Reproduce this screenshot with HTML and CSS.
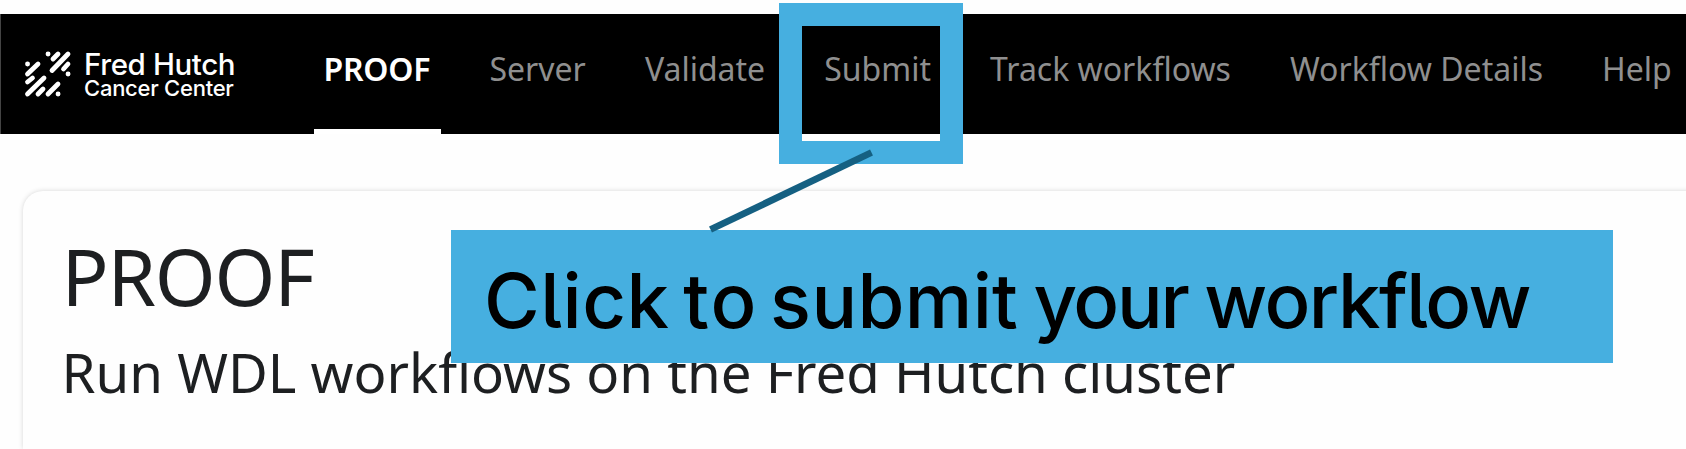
FILE: index.html
```html
<!DOCTYPE html>
<html lang="en">
<head>
<meta charset="utf-8">
<title>PROOF</title>
<link rel="stylesheet" href="styles.css">
</head>
<body>
<header class="navbar">
  <a class="brand">
    <svg class="brand-mark" viewBox="0 0 56 56" width="56" height="56">
      <g stroke="#fff" stroke-width="4.8" stroke-linecap="round" fill="none">
        <path d="M28 8h.1M7.5 18h.1M48 28h.1M38 48h.1M33 13l5-5M32 24.5L48 8M43.500 23l4.500-5M7.500 28L18 18M7.500 36l5-4M7.500 48L24 32M18 48l5-5M28 48l10-10"/>
      </g>
    </svg>
    <span class="brand-text"><span class="brand-name">Fred Hutch</span><span class="brand-sub">Cancer Center</span></span>
  </a>
  <nav class="menu">
    <a class="item active">PROOF</a>
    <a class="item">Server</a>
    <a class="item">Validate</a>
    <a class="item">Submit</a>
    <a class="item">Track workflows</a>
    <a class="item">Workflow Details</a>
    <a class="item">Help</a>
  </nav>
</header>
<main class="card">
  <h1 class="title">PROOF</h1>
  <p class="subtitle">Run WDL workflows on the Fred Hutch cluster</p>
</main>
<div class="highlight"></div>
<div class="callout"><span class="w-click">Click</span> <span class="w-to">to</span> <span class="w-submit">submit</span> <span class="w-your">your</span> <span class="w-workflow">workflow</span></div>
<svg class="pointer" width="180" height="100" viewBox="0 0 180 100"><path d="M10.500 89.500L171.500 12.500" stroke="#156082" stroke-width="6.800"/></svg>
</body>
</html>
```
FILE: styles.css
```css
* { box-sizing: border-box; }
body {
  margin: 0;
  height: 449px;
  overflow: hidden;
  position: relative;
  background: #fefefe;
  font-family: "Noto Sans", "Open Sans", sans-serif;
  padding-top: 13.5px;
}
.navbar {
  display: flex;
  height: 120px;
  background: #000;
  border-left: 1px solid #444;
}
.brand {
  display: flex;
  width: 312.5px;
  padding: 32.5px 0 0 19px;
  flex: none;
}
.brand-mark { flex: none; }
.brand-text {
  display: flex;
  flex-direction: column;
  padding: 4px 0 0 8px;
  color: #fff;
  font-family: Inter, sans-serif;
  white-space: nowrap;
}
.brand-name { font-size: 29.5px; line-height: 28px; font-weight: 500; letter-spacing: -0.4px; }
.brand-sub { font-size: 22px; line-height: 21.5px; font-weight: 500; letter-spacing: -0.25px; }
.menu { display: flex; white-space: nowrap; }
.item {
  height: 120px;
  padding: 31px 10px 0;
  margin-right: 39.1px;
  font-size: 32px;
  line-height: 48px;
  color: #8f8f8f;
  flex: none;
}
.active {
  color: #fff;
  font-weight: 600;
  letter-spacing: -0.2px;
  padding-right: 11px;
  margin-right: 38.1px;
  border-bottom: 5px solid #fff;
}
.card {
  margin: 57px -12px 0 22.5px;
  height: 258.5px;
  padding: 36px 0 0 39px;
  border-radius: 20px 0 0 0;
  background: #fefefe;
  box-shadow: 0 0 5px rgba(0,0,0,.16);
  color: #1d1f21;
  white-space: nowrap;
}
.title { margin: 0; font-size: 78px; line-height: 98px; font-weight: 400; letter-spacing: -1.2px; }
.subtitle { margin: 7px 0 0; font-size: 54.6px; line-height: 80px; }
.highlight {
  position: absolute;
  left: 779px;
  top: 3px;
  width: 184px;
  height: 161px;
  border: 23px solid #46afe0;
}
.callout {
  position: absolute;
  left: 451px;
  top: 229.5px;
  width: 1162px;
  height: 133.5px;
  padding-left: 33px;
  background: #46afe0;
  color: #000;
  font-family: Inter, sans-serif;
  font-feature-settings: "cv05";
  font-size: 76px;
  font-weight: 500;
  letter-spacing: -0.3px;
  word-spacing: -8.5px;
  line-height: 140px;
  white-space: nowrap;
}
.w-click { letter-spacing: 0.5px; margin-right: 2.3px; }
.w-to { letter-spacing: 2px; margin-right: 0.3px; }
.w-submit { letter-spacing: 0.35px; margin-right: 3.6px; }
.w-your { letter-spacing: -2.3px; margin-right: 5.2px; }
.w-workflow { letter-spacing: -1.5px; }
.pointer { position: absolute; left: 700px; top: 140px; }
```
